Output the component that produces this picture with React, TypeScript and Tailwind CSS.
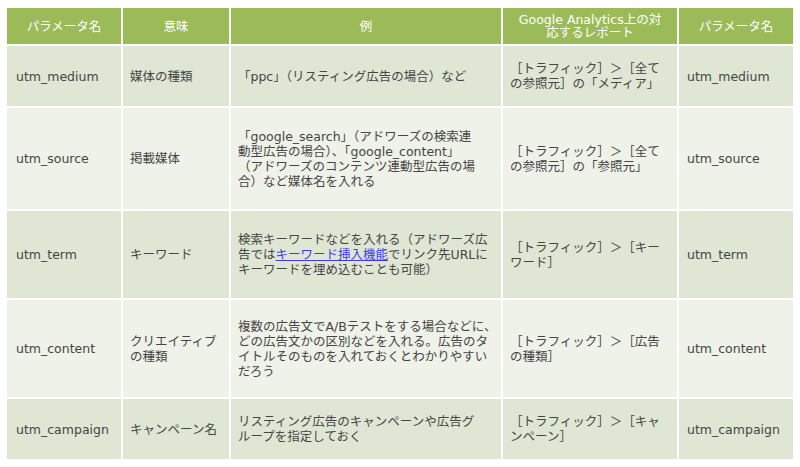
const font = { fontFamily: '"DejaVu Sans", "Noto Sans CJK JP", sans-serif' };

const headers = ['パラメータ名', '意味', '例', 'Google Analytics上の対\n応するレポート', 'パラメータ名'];

type Row = {
  name: string;
  meaning: string[];
  example: React.ReactNode[];
  report: string[];
};

const rows: Row[] = [
  {
    name: 'utm_medium',
    meaning: ['媒体の種類'],
    example: ['「ppc」（リスティング広告の場合）など'],
    report: ['［トラフィック］＞［全て', 'の参照元］の「メディア」'],
  },
  {
    name: 'utm_source',
    meaning: ['掲載媒体'],
    example: [
      '「google_search」（アドワーズの検索連',
      '動型広告の場合）、「google_content」',
      '（アドワーズのコンテンツ連動型広告の場',
      '合）など媒体名を入れる',
    ],
    report: ['［トラフィック］＞［全て', 'の参照元］の「参照元」'],
  },
  {
    name: 'utm_term',
    meaning: ['キーワード'],
    example: [
      '検索キーワードなどを入れる（アドワーズ広',
      <>
        告では
        <a href="#" className="text-[#3b3bf5] underline">
          キーワード挿入機能
        </a>
        でリンク先URLに
      </>,
      'キーワードを埋め込むことも可能）',
    ],
    report: ['［トラフィック］＞［キー', 'ワード］'],
  },
  {
    name: 'utm_content',
    meaning: ['クリエイティブ', 'の種類'],
    example: [
      '複数の広告文でA/Bテストをする場合などに、',
      'どの広告文かの区別などを入れる。広告のタ',
      'イトルそのものを入れておくとわかりやすい',
      'だろう',
    ],
    report: ['［トラフィック］＞［広告', 'の種類］'],
  },
  {
    name: 'utm_campaign',
    meaning: ['キャンペーン名'],
    example: ['リスティング広告のキャンペーンや広告グ', 'ループを指定しておく'],
    report: ['［トラフィック］＞［キャ', 'ンペーン］'],
  },
];

function Lines({ lines }: { lines: React.ReactNode[] }) {
  return (
    <div className="whitespace-nowrap">
      {lines.map((l, i) => (
        <div key={i}>{l}</div>
      ))}
    </div>
  );
}

export default function App() {
  return (
    <div className="min-h-screen w-[800px] bg-white pl-[7px] pt-[8px]" style={font}>
      <div className="grid w-[786px] grid-cols-[114px_106px_270px_174px_114px] grid-rows-[36px_60px_101px_87px_97px_60px] gap-[2px] text-[12.5px] leading-[15px] text-[#454545]">
        {headers.map((h, i) => (
          <div
            key={i}
            className="flex items-center justify-center whitespace-pre bg-[#9bbb59] px-1 text-center leading-[13px] text-white"
          >
            {h}
          </div>
        ))}
        {rows.map((r, i) => {
          const bg = i % 2 === 0 ? 'bg-[#dfe7d4]' : 'bg-[#eef2e8]';
          return [
            <div key={`${i}a`} className={`flex items-center pl-[9px] ${bg}`}>
              {r.name}
            </div>,
            <div key={`${i}b`} className={`flex items-center pl-[7px] ${bg}`}>
              <Lines lines={r.meaning} />
            </div>,
            <div key={`${i}c`} className={`flex items-center pl-[7px] ${bg}`}>
              <Lines lines={r.example} />
            </div>,
            <div key={`${i}d`} className={`flex items-center pl-[7px] ${bg}`}>
              <Lines lines={r.report} />
            </div>,
            <div key={`${i}e`} className={`flex items-center pl-[8px] ${bg}`}>
              {r.name}
            </div>,
          ];
        })}
      </div>
    </div>
  );
}
